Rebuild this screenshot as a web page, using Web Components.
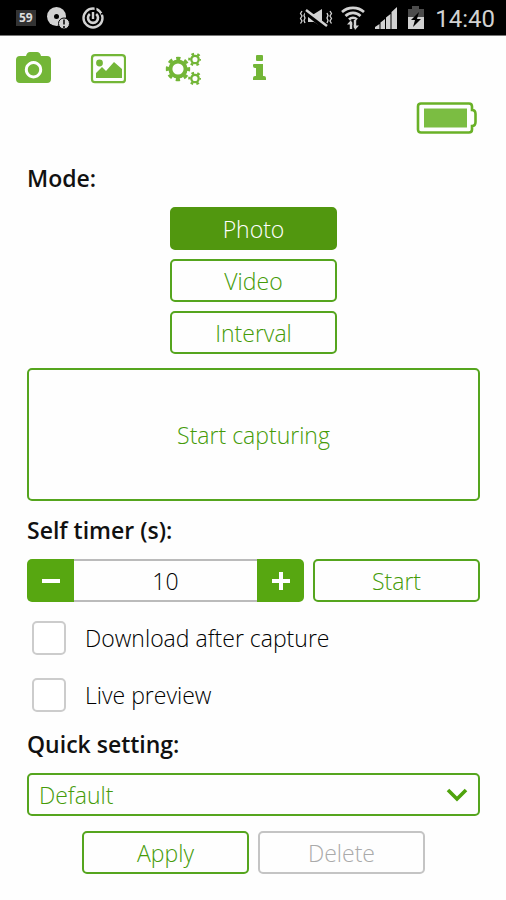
<!DOCTYPE html>
<html lang="en">
<head>
<meta charset="utf-8">
<meta name="viewport" content="width=device-width, initial-scale=1">
<title>Camera remote</title>
<style>
  :root {
    --green: #459b08;
    --green-line: #55a51e;
    --green-solid: #57a711;
    --green-active: #51970f;
    --green-icon: #73b637;
    --grey: #c4c4c4;
  }
  body { margin: 0; background: #fefefe; color: #000; font: 300 23px/32px "Open Sans", sans-serif; }
</style>
</head>
<body>
<camera-app></camera-app>

<script>
const define = (name, html, setup) => {
  const template = document.createElement('template');
  template.innerHTML = html;
  customElements.define(name, class extends HTMLElement {
    constructor() {
      super();
      this.attachShadow({ mode: 'open' }).append(template.content.cloneNode(true));
    }
    connectedCallback() { if (setup) setup(this, this.shadowRoot); }
  });
};

define('status-bar', `
  <style>
    :host { display: flex; align-items: center; justify-content: space-between; height: 36px; padding: 0 11px 0 16px; background: #000; color: #d2d2d2; border-bottom: 1px solid #777; box-sizing: border-box; }
    div { display: flex; align-items: center; }
    .left { gap: 10px; }
    .right { gap: 8px; }
    .badge { background: #333; color: #ddd; font: 700 12px/16px "Open Sans", sans-serif; padding: 0 3px; }
    time { font: 400 24px/30px Roboto, sans-serif; padding: 3px 0 0 2px; }
    svg { display: block; }
  </style>
  <div class="left">
    <span class="badge">59</span>
    <svg width="24" height="24" viewBox="0 0 24 24" aria-hidden="true">
      <circle cx="10.500" cy="10.500" r="9.500" fill="#d2d2d2"/><circle cx="10.500" cy="10.500" r="2.500" fill="#000"/>
      <circle cx="18" cy="17.500" r="5.500" fill="#d2d2d2" stroke="#000"/><path d="M18 13.500v5M18 20v2" stroke="#222" stroke-width="1.800"/>
    </svg>
    <svg width="24" height="24" viewBox="0 0 24 24" fill="none" stroke="#d2d2d2" aria-hidden="true">
      <circle cx="13" cy="12" r="9.500" stroke-width="2.400"/>
      <path d="M15.500 0v5M21 8l4-1M5 19l-2 2" stroke="#000" stroke-width="1.800"/>
      <path d="M9.800 8a5 5 0 1 0 6.400 0" stroke-width="2.600"/><path d="M13 6v7" stroke-width="2.400"/>
    </svg>
  </div>
  <div class="right">
    <svg width="34" height="24" viewBox="0 0 34 24" fill="none" stroke="#d2d2d2" aria-hidden="true">
      <path d="M3 5l-1.500 2.500L3 10l-1.500 2.500L3 15l-1.500 2.500M6 7L5 9.500 6 12l-1 2.500L6 17M31 5l1.500 2.500L31 10l1.500 2.500L31 15l1.500 2.500M28 7l1 2.500-1 2.500 1 2.500-1 2.500" stroke-width="1.300"/>
      <path d="M9 8h6l8-5v18l-8-5H9z" fill="#d2d2d2" stroke="none"/>
      <path d="M7 6l21 17" stroke="#000" stroke-width="5"/><path d="M7 4l21 16" stroke-width="2.400"/>
    </svg>
    <svg width="24" height="24" viewBox="0 0 24 24" fill="none" stroke="#d2d2d2" stroke-width="2.600" aria-hidden="true">
      <path d="M1 6c6-5.500 16-5.500 22 0M4.500 10c4-4.200 11-4.200 15 0M8 13.500c2.400-2.300 5.600-2.300 8 0"/>
      <path d="M10 23v-7M14 14v8" stroke-width="2.400"/><path d="M6 18.500L10 14l1.500 4.500zM12.500 19.500H18L14 24z" fill="#d2d2d2" stroke="none"/>
    </svg>
    <svg width="26" height="24" viewBox="0 0 26 24" fill="#d2d2d2" aria-hidden="true">
      <path d="M2 23v-2l4.500-3v5zM7.500 23v-6.500L12 13v10zM13 23V11.500L17.500 8v15zM18.500 23V6L24 1v22z"/>
    </svg>
    <svg width="18" height="24" viewBox="0 0 18 24" aria-hidden="true">
      <path d="M5 0h7v3h5v8H1V3h4z" fill="#4c4c4c"/><path d="M1 11h16v12H1z" fill="#d2d2d2"/>
      <path d="M12 6l-8 8h4l-2 7 8-8h-4z" fill="#000"/>
    </svg>
    <time>14:40</time>
  </div>`);

define('nav-tabs', `
  <style>
    :host { display: block; padding: 15px 15px 0; color: var(--green-icon); }
    nav { display: flex; gap: 39px; }
    a { color: inherit; display: block; width: 36px; height: 36px; }
    svg { display: block; width: 36px; height: 36px; }
  </style>
  <nav aria-label="Main">
    <a href="#camera" aria-label="Camera"><svg viewBox="0 0 36 36"><path fill="currentColor" fill-rule="evenodd" d="M11 5q1-4 4-4h7q3 0 4 4h6q4 0 4 4v19q0 4-4 4H5q-4 0-4-4V9q0-4 4-4h5zM18.500 10a8.700 8.700 0 1 0 .01 0zM18.500 13a5.700 5.700 0 1 1-.01 0z"/></svg></a>
    <a href="#gallery" aria-label="Gallery"><svg viewBox="0 0 36 36"><rect x="2" y="4.200" width="33" height="27" rx="3" fill="none" stroke="currentColor" stroke-width="2.200"/><circle cx="9.500" cy="12" r="3.400" fill="currentColor"/><path fill="currentColor" d="M6 27v-5l6-6 4 4 8-9 8 7v9z"/></svg></a>
    <a href="#settings" aria-label="Settings"><svg viewBox="0 0 36 36" fill="none" stroke="currentColor">
      <circle cx="13" cy="18" r="7.600" stroke-width="4"/><circle cx="13" cy="18" r="10.600" stroke-width="3.200" stroke-dasharray="4.300 4.025" stroke-dashoffset="2.150"/>
      <g id="small"><circle cx="30" cy="8.500" r="3.700" stroke-width="2.300"/><circle cx="30" cy="8.500" r="5.600" stroke-width="2.400" stroke-dasharray="2.600 3.264" stroke-dashoffset="1.300"/></g>
      <use href="#small" y="19"/></svg></a>
    <a href="#info" aria-label="Information"><svg viewBox="0 0 36 36" fill="currentColor"><rect x="16" y="4" width="7" height="6" rx="1"/><path d="M14 13h9v12h1q2 0 2 2v2H13v-2q0-2 2-2h1v-8h-1q-2 0-2-2v-1q0-1 1-1z"/></svg></a>
  </nav>`);

define('battery-level', `
  <style>:host { display: flex; justify-content: flex-end; padding: 14px 28px 0; } svg { display: block; }</style>
  <svg width="62" height="34" viewBox="0 0 62 34" role="img" aria-label="Battery full"><path d="M5 2.500h48q3 0 3 3V9q3.500 0 3.500 4v8q0 4-3.500 4v3.500q0 3-3 3H5q-3 0-3-3v-23q0-3 3-3z" fill="none" stroke="#69b127" stroke-width="2.600"/><rect x="8" y="7.500" width="43" height="19" fill="#7bbd42"/></svg>`);

define('section-title', `
  <style>:host { display: block; color: #111; } h2 { margin: 0; font: 600 23px/32px "Open Sans", sans-serif; }</style>
  <h2><slot></slot></h2>`);

define('app-button', `
  <style>
    :host { display: block; width: 167px; }
    button { display: block; width: 100%; height: 43px; padding: 0; margin: 0; background: transparent; border: 2px solid var(--green-line); border-radius: 5px; color: var(--green); font: inherit; }
    :host([selected]) button { background: var(--green-active); border-color: var(--green-active); color: #fff; }
    :host([large]) { width: auto; }
    :host([large]) button { height: 133px; }
    button:disabled { border-color: var(--grey); color: #aaa; }
  </style>
  <button type="button"><slot></slot></button>`,
  (host, root) => {
    const b = root.querySelector('button');
    b.disabled = host.hasAttribute('disabled');
    if (host.hasAttribute('selected')) b.setAttribute('aria-pressed', 'true');
  });

define('number-stepper', `
  <style>
    :host { display: flex; flex: 1; min-width: 0; height: 43px; }
    button { flex: none; width: 47px; padding: 0; border: 0; background: var(--green-solid); display: grid; place-items: center; }
    button:first-of-type { border-radius: 5px 0 0 5px; }
    button:last-of-type { border-radius: 0 5px 5px 0; }
    input { flex: 1; min-width: 0; width: 0; box-sizing: border-box; border: solid #bbb; border-width: 2px 0; border-radius: 0; padding: 0; margin: 0; background: transparent; color: inherit; font: inherit; text-align: center; }
    svg { display: block; }
  </style>
  <button type="button" aria-label="Decrease"><svg width="20" height="20"><path d="M1 10h18" stroke="#fff" stroke-width="4"/></svg></button>
  <input type="text" inputmode="numeric" aria-label="Self timer in seconds">
  <button type="button" aria-label="Increase"><svg width="20" height="20"><path d="M1 10h18M10 1v18" stroke="#fff" stroke-width="4"/></svg></button>`,
  (host, root) => {
    const input = root.querySelector('input');
    input.value = host.getAttribute('value');
    const [minus, plus] = root.querySelectorAll('button');
    minus.onclick = () => { input.value = Math.max(0, Number(input.value) - 1); };
    plus.onclick = () => { input.value = Number(input.value) + 1; };
  });

define('check-option', `
  <style>
    :host { display: block; padding-left: 5px; }
    label { display: flex; align-items: center; gap: 19px; }
    input { appearance: none; box-sizing: border-box; flex: none; width: 34px; height: 34px; margin: 0; border: 2px solid #ccc; border-radius: 5px; background: #fff; }
    input:checked { background: var(--green-solid); border-color: var(--green-solid); }
  </style>
  <label><input type="checkbox"><slot></slot></label>`);

define('setting-select', `
  <style>
    :host { display: grid; align-items: center; }
    select, svg { grid-area: 1 / 1; }
    select { appearance: none; width: 100%; height: 43px; box-sizing: border-box; margin: 0; padding: 0 40px 0 10px; border: 2px solid var(--green-line); border-radius: 5px; background: transparent; color: var(--green); font: inherit; }
    svg { justify-self: end; margin-right: 12px; pointer-events: none; }
  </style>
  <select aria-label="Quick setting"></select>
  <svg width="22" height="14" viewBox="0 0 22 14" aria-hidden="true"><path d="M2 2l9 9 9-9" fill="none" stroke="#4fa30d" stroke-width="3.600"/></svg>`,
  (host, root) => {
    root.querySelector('select').replaceChildren(...host.getAttribute('options').split(',').map(o => new Option(o)));
  });

define('camera-app', `
  <style>
    :host { display: block; }
    main { display: flex; flex-direction: column; padding: 27px 26px 26px 27px; }
    .modes { display: flex; flex-direction: column; align-items: center; gap: 9px; margin: 13px 0 14px; }
    .timer { display: flex; gap: 9px; margin: 13px 0 19px; }
    .title { margin-top: 13px; }
    .checks { display: grid; gap: 23px; margin-bottom: 16px; }
    .select { margin: 13px 0 15px; }
    .actions { display: flex; justify-content: center; gap: 9px; }
  </style>
  <status-bar></status-bar>
  <nav-tabs></nav-tabs>
  <battery-level></battery-level>
  <main>
    <section-title>Mode:</section-title>
    <div class="modes">
      <app-button selected>Photo</app-button>
      <app-button>Video</app-button>
      <app-button>Interval</app-button>
    </div>
    <app-button large>Start capturing</app-button>
    <section-title class="title">Self timer (s):</section-title>
    <div class="timer"><number-stepper value="10"></number-stepper><app-button>Start</app-button></div>
    <div class="checks">
      <check-option>Download after capture</check-option>
      <check-option>Live preview</check-option>
    </div>
    <section-title>Quick setting:</section-title>
    <setting-select class="select" options="Default"></setting-select>
    <div class="actions"><app-button>Apply</app-button><app-button disabled>Delete</app-button></div>
  </main>`);
</script>
</body>
</html>
